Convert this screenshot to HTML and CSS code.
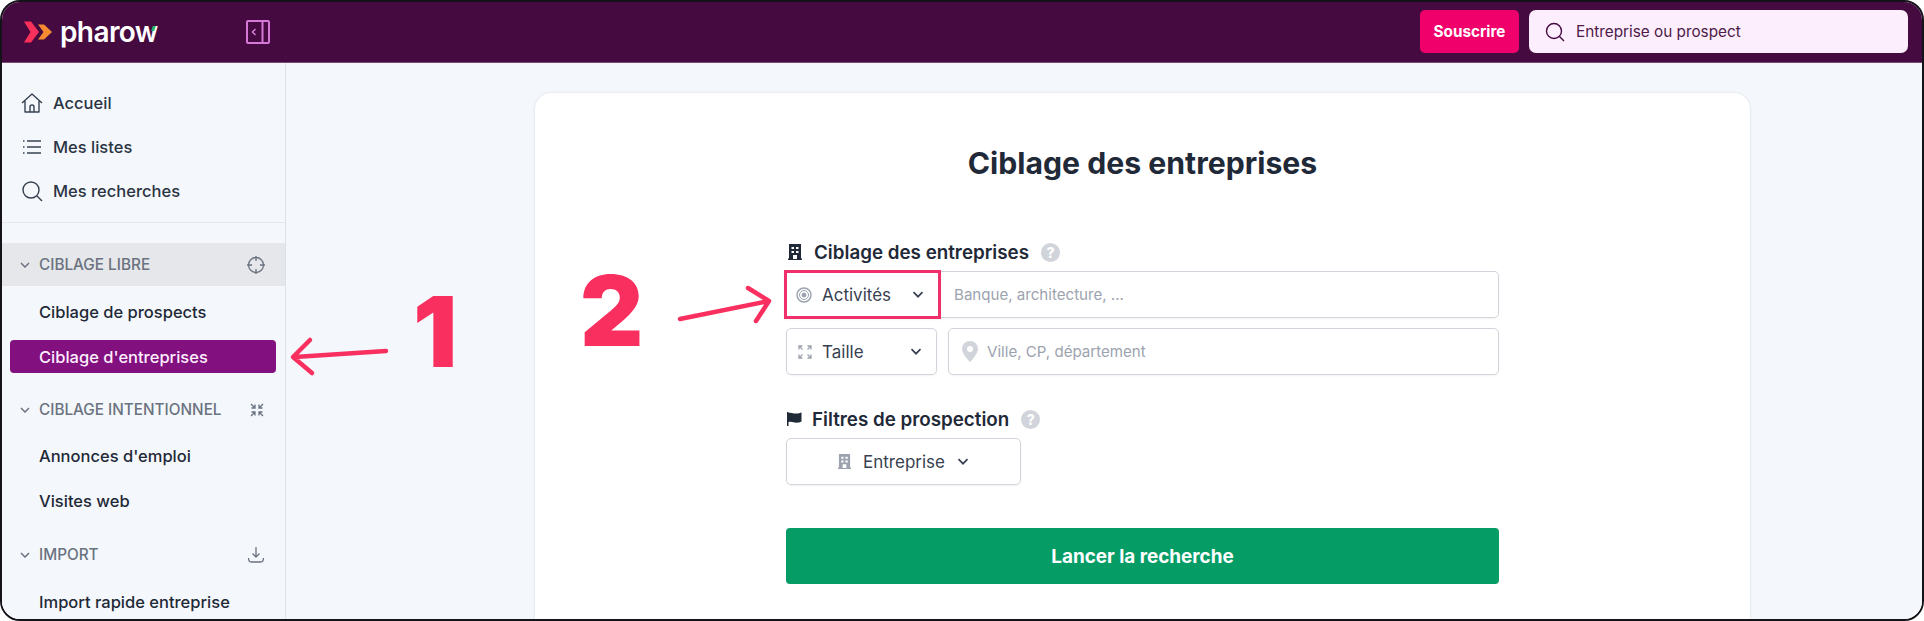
FILE: index.html
```html
<!DOCTYPE html>
<html lang="fr">
<head>
    <meta charset="UTF-8">
    <meta name="viewport" content="width=device-width, initial-scale=1.0">
    <title>Pharow - Ciblage des entreprises</title>
    <link rel="stylesheet" href="styles.css">
</head>
<body>
    <div class="frame">
        <header class="topbar">
            <div class="logo">
                <svg class="logo-mark" width="29" height="22" viewBox="0 0 29 22">
                    <path d="M0 .5h7l8 10.500-8 10.500H0l6.500-10.500z" fill="#f9305a"/>
                    <path d="M14 3.500h6l8 7.500-8 7.500h-6l5.500-7.500z" fill="#f58a30"/>
                </svg>
                <span class="logo-text">pharow</span>
                <span class="logo-tick"></span>
            </div>
            <svg class="collapse" width="24" height="24" viewBox="0 0 24 24" fill="none" stroke="#d678d8" stroke-width="2">
                <rect x="1" y="1" width="22" height="22" rx="1"/>
                <path d="M16.500 1v22"/>
                <path d="M9.500 9l-3 3 3 3" stroke-width="1.500"/>
            </svg>
            <button class="subscribe">Souscrire</button>
            <div class="search">
                <svg width="20" height="20" viewBox="0 0 20 20" fill="none" stroke="#450a40" stroke-width="1.400">
                    <circle cx="9" cy="9" r="7.500"/>
                    <path d="M14.500 14.500l4.500 4.500"/>
                </svg>
                <span>Entreprise ou prospect</span>
            </div>
        </header>

        <div class="layout">
            <aside class="sidebar">
                <nav class="main-nav">
                    <a class="nav-item">
                        <svg width="22" height="22" viewBox="0 0 22 22" fill="none" stroke="#374151" stroke-width="1.400" stroke-linejoin="round">
                            <path d="M1 11L11 2l10 9M4 9v11h14V9"/>
                            <path d="M9 20v-5a2 2 0 0 1 4 0v5"/>
                        </svg>
                        Accueil
                    </a>
                    <a class="nav-item">
                        <svg width="22" height="22" viewBox="0 0 22 22" fill="none" stroke="#374151" stroke-width="1.400">
                            <path d="M6 5h14M6 11h14M6 17h14"/>
                            <path d="M2 5h1.500M2 11h1.500M2 17h1.500"/>
                        </svg>
                        Mes listes
                    </a>
                    <a class="nav-item">
                        <svg width="22" height="22" viewBox="0 0 22 22" fill="none" stroke="#374151" stroke-width="1.400">
                            <circle cx="10" cy="10" r="8"/>
                            <path d="M16 16l5 5"/>
                        </svg>
                        Mes recherches
                    </a>
                </nav>

                <div class="section section-open">
                    <svg class="chev" width="10" height="6" viewBox="0 0 10 6"><path d="M1 1l4 4 4-4"/></svg>
                    <span class="section-name">CIBLAGE LIBRE</span>
                    <svg class="section-icon" width="18" height="18" viewBox="0 0 18 18" fill="none" stroke="#6b7280" stroke-width="1.300">
                        <circle cx="9" cy="9" r="7.500"/>
                        <path d="M9 0v5M9 13v5M0 9h5M13 9h5"/>
                    </svg>
                </div>
                <div class="sub-list">
                    <a class="sub-item">Ciblage de prospects</a>
                    <a class="sub-item active">Ciblage d'entreprises</a>
                </div>

                <div class="section">
                    <svg class="chev" width="10" height="6" viewBox="0 0 10 6"><path d="M1 1l4 4 4-4"/></svg>
                    <span class="section-name">CIBLAGE INTENTIONNEL</span>
                    <svg class="section-icon" width="16" height="16" viewBox="0 0 16 16" fill="none" stroke="#6b7280" stroke-width="1.300">
                        <path d="M2 2l4 4M6 2.500V6H2.500M14 2l-4 4M10 2.500V6h3.500M2 14l4-4M6 13.500V10H2.500M14 14l-4-4M10 13.500V10h3.500"/>
                    </svg>
                </div>
                <div class="sub-list sub-list-tight">
                    <a class="sub-item">Annonces d'emploi</a>
                    <a class="sub-item">Visites web</a>
                </div>

                <div class="section">
                    <svg class="chev" width="10" height="6" viewBox="0 0 10 6"><path d="M1 1l4 4 4-4"/></svg>
                    <span class="section-name">IMPORT</span>
                    <svg class="section-icon" width="18" height="18" viewBox="0 0 18 18" fill="none" stroke="#6b7280" stroke-width="1.300">
                        <path d="M9 1v10M5.500 7.500L9 11l3.500-3.500"/>
                        <path d="M1.500 12c0 3 1 4 3 4h9c2 0 3-1 3-4"/>
                    </svg>
                </div>
                <div class="sub-list">
                    <a class="sub-item">Import rapide entreprise</a>
                </div>
            </aside>

            <main class="content">
                <section class="card">
                    <h1>Ciblage des entreprises</h1>
                    <form class="targeting">
                        <div class="field-label">
                            <svg width="14" height="16" viewBox="0 0 14 16">
                                <path d="M1 0h12v14.500h1V16H0v-1.500h1z" fill="#1f2937"/>
                                <path d="M3.500 3h2.500v2H3.500zM8 3h2.500v2H8zM3.500 7h2.500v2H3.500zM8 7h2.500v2H8zM5 11h4v4H5z" fill="#fff"/>
                            </svg>
                            <span>Ciblage des entreprises</span>
                            <span class="help">?</span>
                        </div>
                        <div class="row">
                            <div class="select select-marked">
                                <svg width="16" height="16" viewBox="0 0 16 16" fill="none" stroke="#9ca3af">
                                    <circle cx="8" cy="8" r="7" stroke-width="1.500"/>
                                    <circle cx="8" cy="8" r="4.500" stroke-width="1"/>
                                    <circle cx="8" cy="8" r="2" fill="#9ca3af"/>
                                </svg>
                                <span class="select-text">Activités</span>
                                <svg class="chev chev-dark" width="12" height="7" viewBox="0 0 12 7"><path d="M1.500 1.200L6 5.700l4.500-4.500"/></svg>
                            </div>
                            <div class="input input-joined">Banque, architecture, ...</div>
                        </div>
                        <div class="row row-gap">
                            <div class="select">
                                <svg width="14" height="14" viewBox="0 0 14 14" fill="none" stroke="#9ca3af" stroke-width="1.300">
                                    <path d="M1 4.500V1h3.500M1 1l3.500 3.500M13 4.500V1H9.500M13 1L9.500 4.500M1 9.500V13h3.500M1 13l3.500-3.500M13 9.500V13H9.500M13 13L9.500 9.500"/>
                                </svg>
                                <span class="select-text">Taille</span>
                                <svg class="chev chev-dark" width="12" height="7" viewBox="0 0 12 7"><path d="M1.500 1.200L6 5.700l4.500-4.500"/></svg>
                            </div>
                            <div class="input">
                                <svg width="16" height="21" viewBox="0 0 16 21">
                                    <path fill-rule="evenodd" d="M8 0a8 8 0 0 1 8 8c0 5-8 13-8 13S0 13 0 8a8 8 0 0 1 8-8zm0 5a3 3 0 1 0 0 6 3 3 0 0 0 0-6z" fill="#d1d5db"/>
                                </svg>
                                Ville, CP, département
                            </div>
                        </div>

                        <div class="field-label field-label-second">
                            <svg width="15" height="14" viewBox="0 0 15 14">
                                <path d="M0 0h1.500v1c3-1 5 1 8 .5 2 0 3.500-.5 5-1v9c-1.500.8-3 1.200-5 1.200-3 0-5-1.500-8-.7V14H0z" fill="#1f2937"/>
                            </svg>
                            <span>Filtres de prospection</span>
                            <span class="help">?</span>
                        </div>
                        <div class="filter-btn">
                            <svg width="13" height="15" viewBox="0 0 14 16">
                                <path d="M1 0h12v14.500h1V16H0v-1.500h1z" fill="#9ca3af"/>
                                <path d="M3.500 3h2.500v2H3.500zM8 3h2.500v2H8zM3.500 7h2.500v2H3.500zM8 7h2.500v2H8zM5 11h4v4H5z" fill="#fff"/>
                            </svg>
                            <span>Entreprise</span>
                            <svg class="chev chev-dark" width="12" height="7" viewBox="0 0 12 7"><path d="M1.500 1.200L6 5.700l4.500-4.500"/></svg>
                        </div>
                        <button class="launch" type="button">Lancer la recherche</button>
                    </form>
                </section>
            </main>
        </div>

        <!-- annotations du tuto -->
        <span class="big-num num-one">1</span>
        <span class="big-num num-two">2</span>
        <svg class="arrows" width="1920" height="617" viewBox="0 0 1920 617" fill="none" stroke="#f9305f" stroke-width="4.500" stroke-linecap="round" stroke-linejoin="round">
            <path d="M384 349l-91 6M308 338l-17 17 19 16"/>
            <path d="M678 317l89-18M746 286l21 13-13 20"/>
        </svg>
    </div>
</body>
</html>
```

FILE: styles.css
```css
* {
    box-sizing: border-box;
}
body {
    margin: 0;
    background-color: white;
    font-family: 'Inter', sans-serif;
}
.frame {
    position: relative;
    display: flex;
    flex-direction: column;
    width: 1924px;
    height: 621px;
    border: 2px solid #15131a;
    border-radius: 20px;
    overflow: hidden;
}

/* barre du haut */
.topbar {
    display: flex;
    align-items: center;
    flex: none;
    height: 61px;
    padding: 0 14px 1px 22px;
    background-color: #450a40;
    border-bottom: 1px solid #7a4a76;
}
.logo {
    position: relative;
    display: flex;
    align-items: center;
    gap: 7px;
    width: 222px;
}
.logo-text {
    color: white;
    font-family: 'Inter', sans-serif;
    font-size: 28px;
    font-weight: 600;
    line-height: 32px;
    letter-spacing: -0.6px;
}
.logo-tick {
    position: absolute;
    left: 128px;
    top: 10px;
    width: 3px;
    height: 5px;
    background-color: #1fb573;
    transform: skewX(-18deg);
}
.collapse {
    flex: none;
}
.subscribe {
    width: 99px;
    height: 43px;
    margin-left: auto;
    border: none;
    border-radius: 5px;
    background-color: #f0006a;
    color: white;
    font-family: inherit;
    font-size: 15.300px;
    font-weight: 700;
}
.search {
    display: flex;
    align-items: center;
    gap: 11px;
    width: 379px;
    height: 43px;
    margin-left: 10px;
    padding-left: 16px;
    border-radius: 7px;
    background-color: #fdeefd;
    color: #4d1a49;
    font-size: 15.300px;
}

.layout {
    display: flex;
    flex: 1;
    min-height: 0;
}

/* menu de gauche */
.sidebar {
    flex: none;
    width: 284px;
    background-color: #f4f8fc;
    border-right: 1px solid #dde2e8;
}
.main-nav {
    padding: 18px 0 9px;
    border-bottom: 1px solid #e5e7eb;
}
.nav-item {
    display: flex;
    align-items: center;
    gap: 10px;
    height: 44px;
    padding-left: 19px;
    color: #2b3442;
    font-size: 16.500px;
    font-weight: 500;
}
.section {
    display: flex;
    align-items: center;
    height: 43px;
    padding: 0 20px 0 18px;
    color: #6b7280;
    font-size: 15.300px;
    font-weight: 500;
}
.section-open {
    margin-top: 20px;
    background-color: #e5e7eb;
}
.section-name {
    margin-left: 9px;
}
.section-icon {
    margin-left: auto;
}
.chev {
    flex: none;
    fill: none;
    stroke: #6b7280;
    stroke-width: 1.500;
}
.chev-dark {
    stroke: #374151;
    stroke-width: 1.700;
}
.sub-list {
    display: flex;
    flex-direction: column;
    gap: 12px;
    padding: 9px 0 15px;
}
.sub-list-tight {
    padding: 8px 0 16px;
}
.sub-item {
    display: flex;
    align-items: center;
    height: 33px;
    margin: 0 9px 0 8px;
    padding-left: 29px;
    border-radius: 4px;
    color: #1f2937;
    font-size: 16.500px;
    font-weight: 500;
}
.sub-item.active {
    background-color: #82107f;
    color: #fdeefd;
}

/* contenu */
.content {
    flex: 1;
    display: flex;
    min-width: 0;
    padding: 30px 172px 0 249px;
    background-color: #f4f8fc;
}
.card {
    flex: 1;
    padding: 50px 251px 0;
    background-color: white;
    border-radius: 16px 16px 0 0;
    box-shadow: 0 0 3px rgba(0, 0, 0, 0.12);
}
h1 {
    margin: 0;
    color: #1f2937;
    font-size: 30.200px;
    font-weight: 700;
    line-height: 40px;
    text-align: center;
}
.targeting {
    margin-top: 57px;
}
.field-label {
    display: flex;
    align-items: center;
    height: 24px;
    margin-bottom: 7px;
    color: #1f2937;
    font-size: 18.800px;
    font-weight: 600;
}
.field-label svg {
    margin: 0 12px 0 2px;
}
.field-label-second svg {
    margin: 0 10px 0 1px;
}
.field-label-second {
    margin-top: 32px;
}
.help {
    display: flex;
    align-items: center;
    justify-content: center;
    width: 19px;
    height: 19px;
    margin-left: 12px;
    border-radius: 50%;
    background-color: #d1d5db;
    color: white;
    font-size: 14px;
    font-weight: 800;
}
.row {
    display: flex;
    height: 47px;
}
.row-gap {
    gap: 11px;
    margin-top: 10px;
}
.select {
    display: flex;
    align-items: center;
    flex: none;
    width: 151px;
    padding: 0 14px 0 11px;
    background-color: white;
    border: 1px solid #d1d5db;
    border-radius: 5px;
    box-shadow: 0 1px 2px rgba(0, 0, 0, 0.05);
}
.select-marked {
    position: relative;
    width: 157px;
    height: 49px;
    margin: -1px 0 -1px -2px;
    padding-left: 9px;
    border: 3px solid #f0306a;
    border-radius: 0;
}
.select-text {
    margin-left: 10px;
    margin-right: auto;
    color: #374151;
    font-size: 17px;
}
.input {
    display: flex;
    align-items: center;
    gap: 9px;
    flex: 1;
    padding-left: 13px;
    border: 1px solid #d1d5db;
    border-radius: 5px;
    color: #9ca3af;
    font-size: 15.100px;
    box-shadow: 0 1px 2px rgba(0, 0, 0, 0.05);
}
.input-joined {
    border-left: none;
    border-radius: 0 5px 5px 0;
}
.filter-btn {
    display: flex;
    align-items: center;
    justify-content: center;
    gap: 12px;
    width: 235px;
    height: 47px;
    border: 1px solid #d1d5db;
    border-radius: 5px;
    color: #374151;
    font-size: 17px;
    box-shadow: 0 1px 2px rgba(0, 0, 0, 0.05);
}
.launch {
    display: block;
    width: 100%;
    height: 56px;
    margin-top: 43px;
    border: none;
    border-radius: 4px;
    background-color: #059c66;
    color: white;
    font-family: inherit;
    font-size: 18.900px;
    font-weight: 700;
}

/* annotations */
.big-num {
    position: absolute;
    color: #f9305f;
    font-size: 98px;
    font-weight: 900;
    line-height: 1;
}
.num-one {
    left: 411px;
    top: 281px;
}
.num-two {
    left: 578px;
    top: 260px;
}
.arrows {
    position: absolute;
    left: 0;
    top: 0;
    pointer-events: none;
}
```
